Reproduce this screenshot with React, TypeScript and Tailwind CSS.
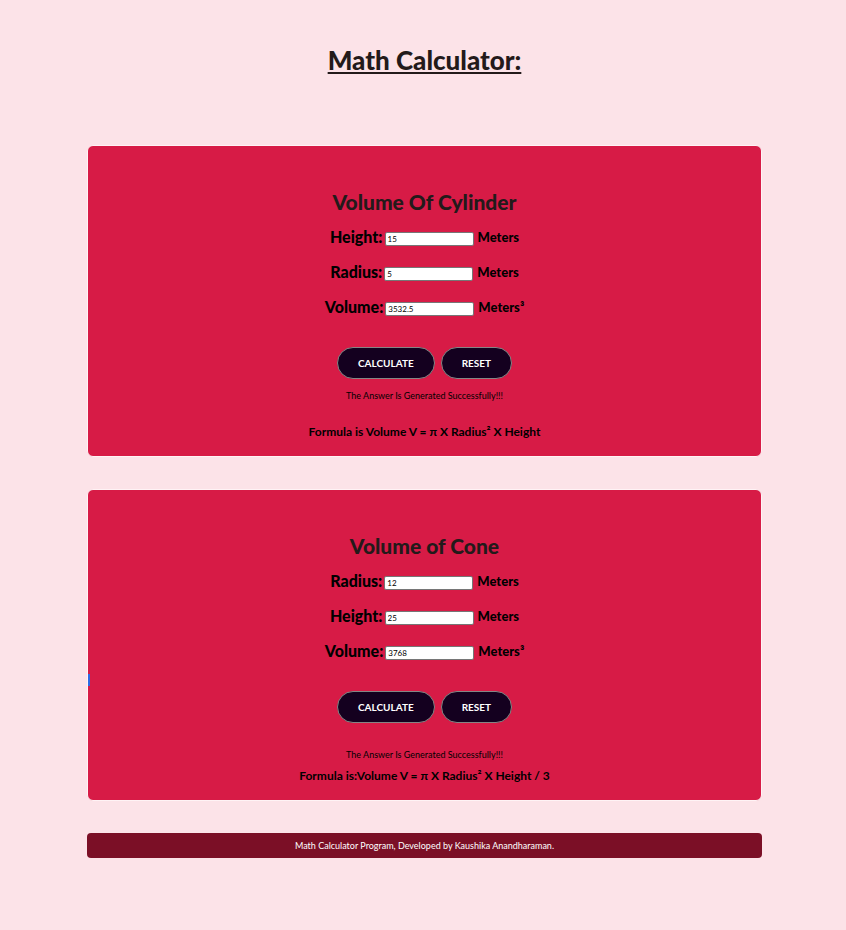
import { useState } from "react";

type Field = { name: string; value: string; cubic?: boolean };

type CalculatorProps = {
  id: string;
  title: string;
  fields: Field[];
  formula: string;
  solve: (values: number[]) => number;
  statusClass: string;
  focusMark?: boolean;
};

function Calculator({ id, title, fields, formula, solve, statusClass, focusMark }: CalculatorProps) {
  const [values, setValues] = useState(fields.map((f) => f.value));
  const [done, setDone] = useState(true);

  const calculate = () => {
    const answer = solve(values.map(Number));
    setValues([values[0], values[1], String(answer)]);
    setDone(true);
  };
  const reset = () => {
    setValues(["", "", ""]);
    setDone(false);
  };

  const button =
    "h-8 rounded-full border border-[#858585] bg-[#14001f] px-5 text-[10px] font-bold text-white";

  return (
    <section className="relative flex flex-col items-center rounded-md border border-[#fff3f5] bg-[#d71b46] pt-10 pb-3.5 text-black">
      {focusMark && <span className="absolute top-[184px] left-0 h-3 w-0.5 bg-[#2d6be4]" />}
      <h2 className="text-[21px] leading-8 font-black text-[#231a1a]">{title}</h2>
      <div className="flex flex-col items-center pt-px">
        {fields.map((field, i) => (
          <div key={field.name} className="flex h-[35px] items-center">
            <label htmlFor={id + field.name} className="text-[16px] leading-5 font-black">
              {field.name}:
            </label>
            <input
              id={id + field.name}
              value={values[i]}
              onChange={(e) => setValues(values.map((v, k) => (k === i ? e.target.value : v)))}
              className="mt-1 ml-0.5 h-[14px] w-[89px] rounded-[2px] border border-[#767676] bg-white px-0.5 text-[8px]"
            />
            <span className="ml-1 text-[13px] leading-5 font-black">
              Meters{field.cubic ? "³" : ""}
            </span>
          </div>
        ))}
      </div>
      <div className="flex gap-1.5 pt-[23px]">
        <button type="button" onClick={calculate} className={button}>
          CALCULATE
        </button>
        <button type="button" onClick={reset} className={button}>
          RESET
        </button>
      </div>
      <p className={"h-4 text-[9px] leading-4 " + statusClass}>
        {done ? "The Answer Is Generated Successfully!!!" : ""}
      </p>
      <p className="text-[12px] leading-5 font-bold">{formula}</p>
    </section>
  );
}

export default function App() {
  return (
    <div className="min-h-screen bg-[#fce3e8] pr-[84px] pl-[87px] font-['Lato','Liberation_Sans',sans-serif]">
      <h1 className="pt-10 text-center text-[26px] leading-10 font-black text-[#231a1a] underline decoration-2 underline-offset-2">
        Math Calculator:
      </h1>
      <main className="flex flex-col gap-8 pt-[65px]">
        <Calculator
          id="cylinder"
          title="Volume Of Cylinder"
          fields={[
            { name: "Height", value: "15" },
            { name: "Radius", value: "5" },
            { name: "Volume", value: "3532.5", cubic: true },
          ]}
          formula="Formula is Volume V = π X Radius² X Height"
          solve={([height, radius]) => 3.14 * radius * radius * height}
          statusClass="mt-[9px] mb-[18px]"
        />
        <Calculator
          id="cone"
          title="Volume of Cone"
          fields={[
            { name: "Radius", value: "12" },
            { name: "Height", value: "25" },
            { name: "Volume", value: "3768", cubic: true },
          ]}
          formula="Formula is:Volume V = π X Radius² X Height / 3"
          solve={([radius, height]) => (3.14 * radius * radius * height) / 3}
          statusClass="mt-6 mb-[3px]"
          focusMark
        />
      </main>
      <footer className="mt-8 rounded bg-[#7b0f26] text-center text-[9px] leading-[25px] text-white">
        Math Calculator Program, Developed by Kaushika Anandharaman.
      </footer>
    </div>
  );
}
